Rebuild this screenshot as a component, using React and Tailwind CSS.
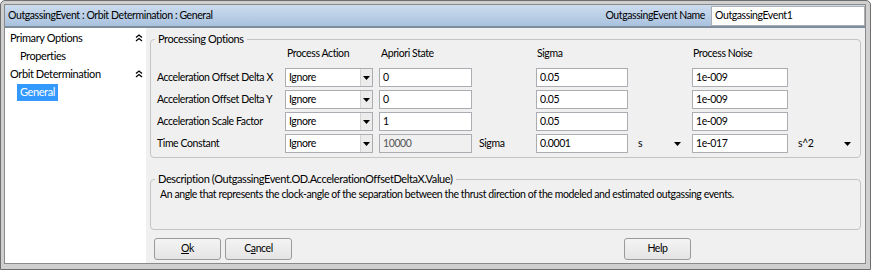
import React from "react";

const font = { fontFamily: 'Lato, "Noto Sans", sans-serif' };

function Chevrons() {
  return (
    <svg width="8" height="8" viewBox="0 0 8 8" className="block">
      <path d="M1 3.5 L4 1 L7 3.5" fill="none" stroke="#000" strokeWidth="1.3" />
      <path d="M1 7 L4 4.5 L7 7" fill="none" stroke="#000" strokeWidth="1.3" />
    </svg>
  );
}

function Arrow() {
  return (
    <svg width="7" height="4" viewBox="0 0 7 4" className="block">
      <path d="M0 0 H7 L3.5 4 Z" fill="#000" />
    </svg>
  );
}

function TextBox({ value, w, disabled }) {
  return (
    <div
      className={`h-[19px] ${w} border border-[#abadb3] ${disabled ? "bg-[#f0f0f0] text-[#555]" : "bg-white text-black"} flex items-center pl-[3px] leading-none`}
    >
      {value}
    </div>
  );
}

function Combo() {
  return (
    <div className="h-[19px] w-[88px] border border-[#abadb3] bg-white flex">
      <div className="flex-1 flex items-center pl-[3px] leading-none">Ignore</div>
      <div className="w-[12px] border-l border-[#d4d4d4] bg-[#ececec] flex items-center justify-center">
        <Arrow />
      </div>
    </div>
  );
}

function Row({ label, apriori, disabled, last }) {
  return (
    <div className="flex items-center h-[19px]">
      <div className="w-[134px] pl-[6px] whitespace-nowrap">{label}</div>
      <Combo />
      <div className="w-[6px]" />
      <TextBox value={apriori} w="w-[93px]" disabled={disabled} />
      <div className="w-[64px] pl-[7px]">{last ? "Sigma" : ""}</div>
      <TextBox value={last ? "0.0001" : "0.05"} w="w-[92px]" />
      <div className="w-[64px] flex items-center">
        {last && (
          <>
            <span className="pl-[10px] flex-1">s</span>
            <span className="pr-[11px]"><Arrow /></span>
          </>
        )}
      </div>
      <TextBox value={last ? "1e-017" : "1e-009"} w="w-[96px]" />
      {last && (
        <div className="flex-1 flex items-center">
          <span className="pl-[10px] flex-1">s^2</span>
          <span className="pr-[9px]"><Arrow /></span>
        </div>
      )}
    </div>
  );
}

function Btn({ children, className = "" }) {
  return (
    <div
      className={`h-[22px] w-[67px] rounded-[3px] border border-[#9a9a9a] bg-gradient-to-b from-[#f4f4f4] to-[#e4e4e4] flex items-center justify-center ${className}`}
    >
      {children}
    </div>
  );
}

export default function App() {
  return (
    <div style={font} className="w-[871px] h-[270px] bg-white text-black text-[10.5px] tracking-[-0.4px]">
      <div className="w-[871px] h-[270px] rounded-tl-[5px] rounded-tr-[5px] border border-[#6e6e6e] bg-[#cfcfcf] pt-[3px] pl-[3px] pr-[4px] pb-[5px]">
        <div className="w-full h-full border border-[#8a8a8a] flex flex-col bg-[#f0f0f0]">
          {/* header */}
          <div className="h-[23px] shrink-0 flex items-center bg-gradient-to-b from-[#cddcee] to-[#a9c2df] border-b-2 border-b-[#7d8d9e] pl-[3px]">
            <div className="flex-1">OutgassingEvent : Orbit Determination : General</div>
            <div className="mr-[6px]">OutgassingEvent Name</div>
            <div className="h-[20px] w-[154px] bg-white border border-[#abadb3] flex items-center pl-[3px]">
              OutgassingEvent1
            </div>
          </div>
          {/* body */}
          <div className="flex-1 flex">
            {/* left nav */}
            <div className="w-[141px] bg-white pt-[1px] text-[11px]">
              <div className="flex items-center justify-between h-[18px] pl-[5px] pr-[3px]">
                <span>Primary Options</span>
                <Chevrons />
              </div>
              <div className="h-[18px] flex items-center pl-[15px]">Properties</div>
              <div className="flex items-center justify-between h-[18px] pl-[5px] pr-[3px]">
                <span>Orbit Determination</span>
                <Chevrons />
              </div>
              <div className="h-[18px] flex items-center pl-[12px]">
                <span className="bg-[#3399ff] text-white px-[3px] h-[17px] flex items-center">General</span>
              </div>
            </div>
            {/* right content */}
            <div className="flex-1 flex flex-col px-[4px]">
              <fieldset className="mt-[3px] border border-[#c4c4c4] rounded-[4px] pb-[4px]">
                <legend className="ml-[4px] px-[3px] text-[11px] leading-[16px]">Processing Options</legend>
                <div className="flex h-[21px] items-start leading-[13px]">
                  <div className="w-[136px]" />
                  <div className="w-[94px]">Process Action</div>
                  <div className="w-[156px]">Apriori State</div>
                  <div className="w-[156px]">Sigma</div>
                  <div>Process Noise</div>
                </div>
                <div className="flex flex-col gap-[3px]">
                  <Row label="Acceleration Offset Delta X" apriori="0" />
                  <Row label="Acceleration Offset Delta Y" apriori="0" />
                  <Row label="Acceleration Scale Factor" apriori="1" />
                  <Row label="Time Constant" apriori="10000" disabled last />
                </div>
              </fieldset>
              <fieldset className="mt-[13px] h-[59px] border border-[#c4c4c4] rounded-[4px]">
                <legend className="ml-[4px] px-[3px] text-[11px] leading-[16px]">
                  Description (OutgassingEvent.OD.AccelerationOffsetDeltaX.Value)
                </legend>
                <div className="pl-[9px] leading-[14px]">
                  An angle that represents the clock-angle of the separation between the thrust direction of the modeled and estimated outgassing events.
                </div>
              </fieldset>
              <div className="flex items-center mt-[8px] gap-[4px]">
                <Btn className="ml-[4px]"><span><span className="underline">O</span>k</span></Btn>
                <Btn><span>C<span className="underline">a</span>ncel</span></Btn>
                <div className="w-[324px]" />
                <Btn>Help</Btn>
              </div>
            </div>
          </div>
        </div>
      </div>
    </div>
  );
}
